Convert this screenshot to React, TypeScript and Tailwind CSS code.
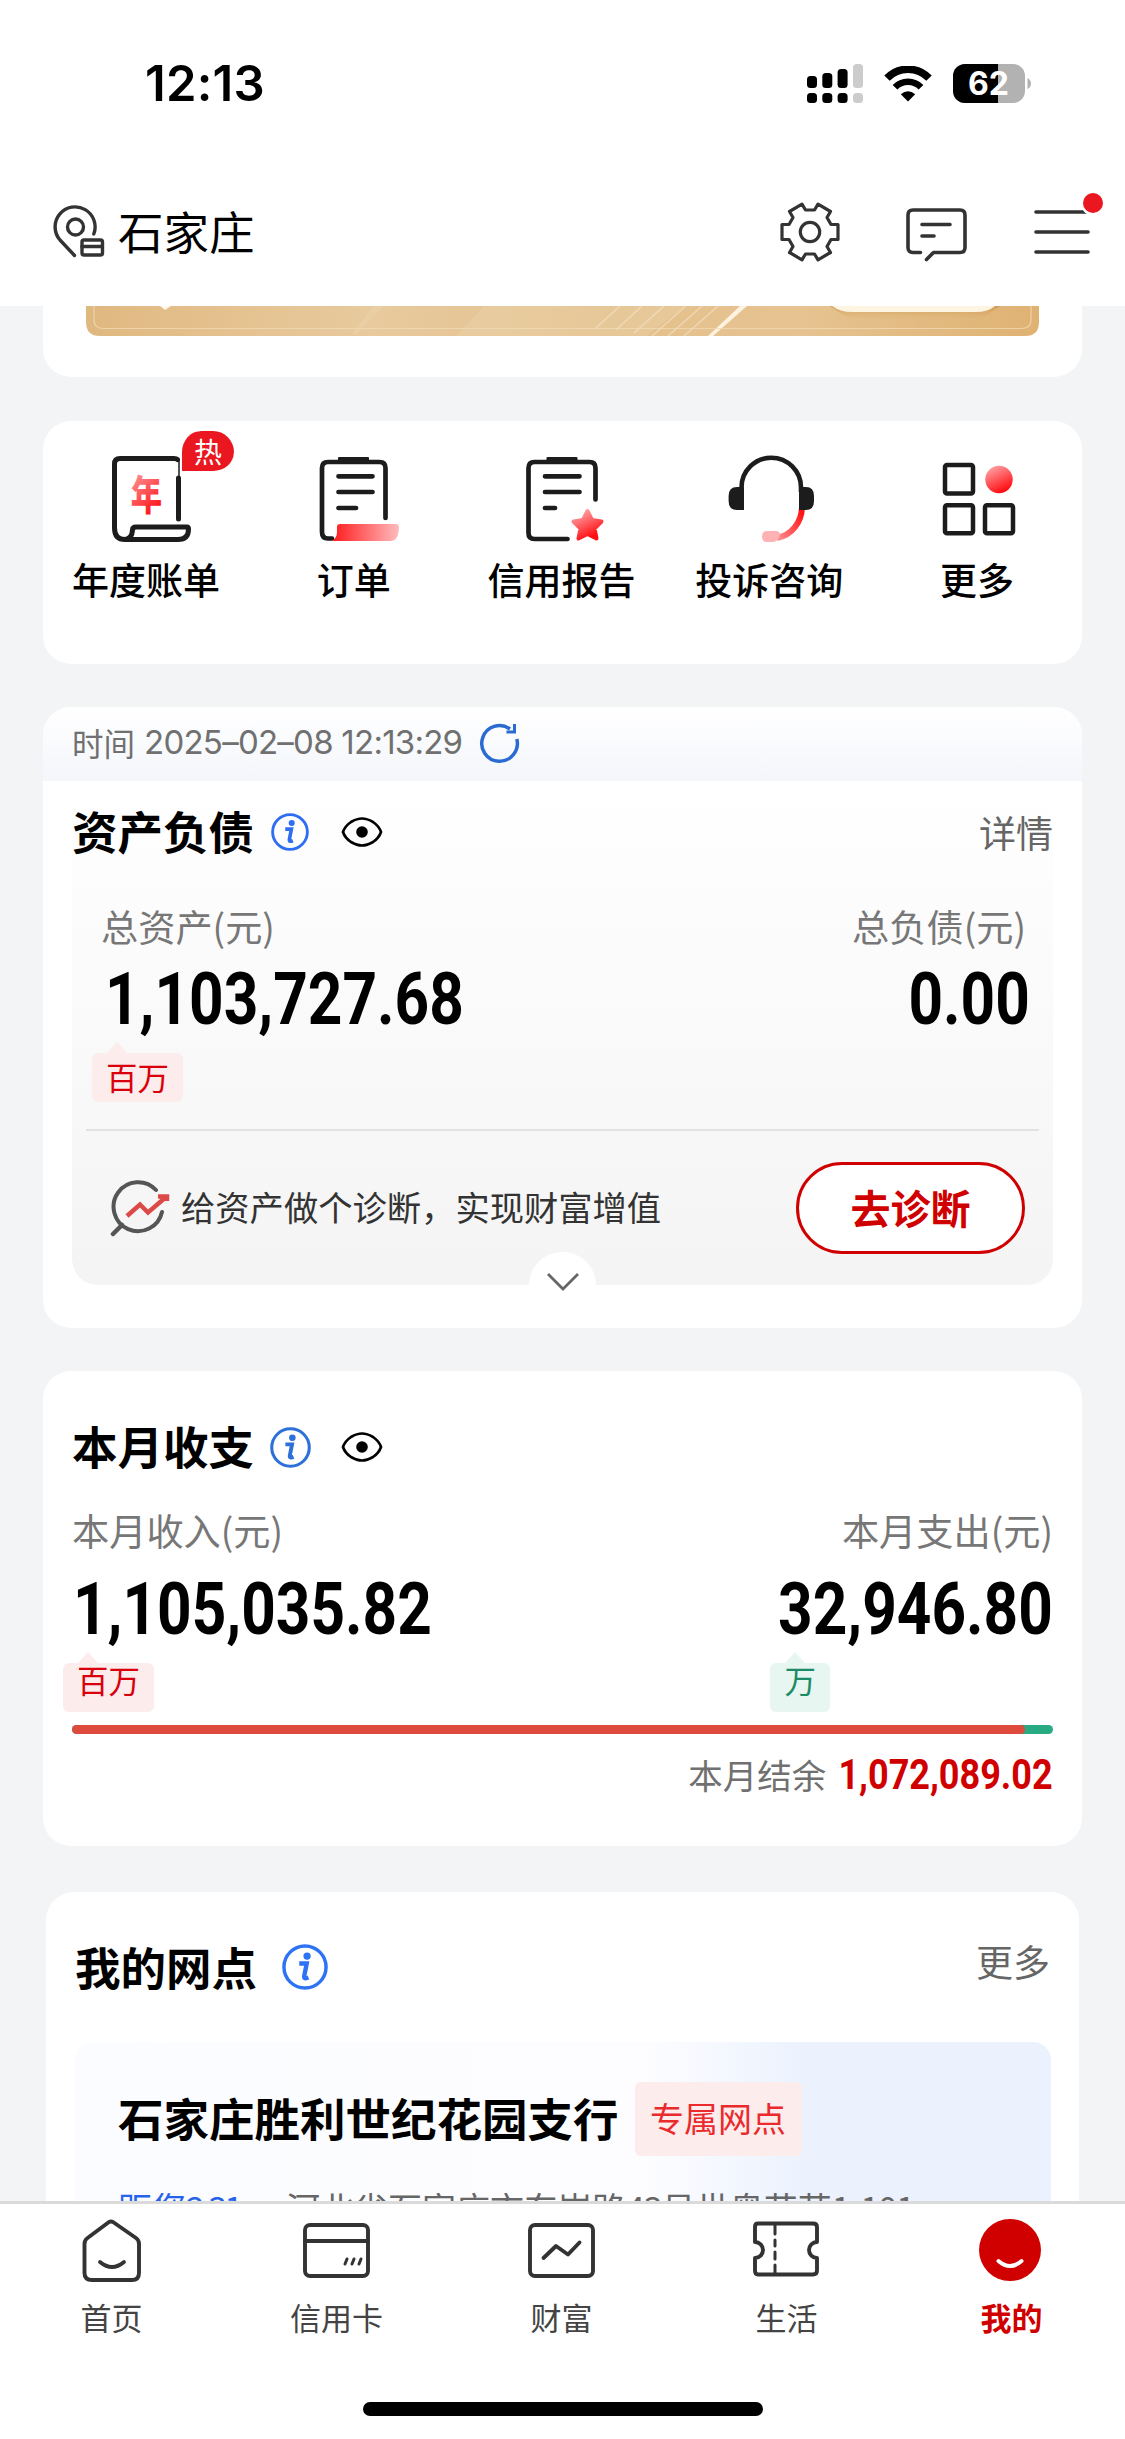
import type { ReactNode } from "react";

const INK = "#1c1c1c";
const LINE = "#333333";

function StatusBar() {
  return (
    <div className="flex h-[167px] items-center justify-between pl-[145px] pr-[94px]">
      <span className="font-[Inter] text-[49px] font-semibold leading-none tracking-[0.2px] text-black">12:13</span>
      <div className="flex h-[39px] items-center">
        <svg width="56" height="39" viewBox="0 0 56 39" className="mr-[21px]">
          <g fill="#000">
            <rect x="0" y="12" width="10" height="12" rx="3.5" />
            <rect x="15.3" y="9" width="10" height="15" rx="3.5" />
            <rect x="30.6" y="5" width="10" height="19" rx="3.5" />
            <rect x="0" y="29" width="10" height="10" rx="3.5" />
            <rect x="15.3" y="29" width="10" height="10" rx="3.5" />
            <rect x="30.6" y="29" width="10" height="10" rx="3.5" />
          </g>
          <g fill="#cccccc">
            <rect x="46" y="0" width="10" height="24" rx="3.5" />
            <rect x="46" y="29" width="10" height="10" rx="3.5" />
          </g>
        </svg>
        <svg width="48" height="36" viewBox="0 0 48 36" className="mr-[21px]">
          <path d="M3 12.2A29 29 0 0 1 45 12.2" fill="none" stroke="#000" strokeWidth="7.5" />
          <path d="M11 21.3A18 18 0 0 1 37 21.3" fill="none" stroke="#000" strokeWidth="6.5" />
          <path d="M24 35.500L16.800 28.300Q24 22.200 31.200 28.300Z" />
        </svg>
        <svg width="78" height="39" viewBox="0 0 78 39">
          <defs>
            <clipPath id="battery"><rect width="72" height="39" rx="12" /></clipPath>
          </defs>
          <g clipPath="url(#battery)">
            <rect width="72" height="39" fill="#b2b2b2" />
            <rect width="45" height="39" fill="#000" />
          </g>
          <path d="M74.500 14Q78 16 78 19.500Q78 23 74.500 25Z" fill="#b2b2b2" />
          <text x="35.500" y="31" textAnchor="middle" fontFamily="Inter" fontWeight="700" fontSize="32" fill="#fff">62</text>
        </svg>
      </div>
    </div>
  );
}

function Header() {
  return (
    <div className="flex h-[139px] items-start justify-between pl-[52px] pr-[18px]">
      <div className="flex h-[130px] items-center">
        <svg width="54" height="54" viewBox="0 0 54 54" fill="none" stroke={LINE} strokeWidth="3.400" strokeLinecap="round" strokeLinejoin="round">
          <path d="M41.800 29A20 20 0 1 0 8 35L22.500 50.500" />
          <circle cx="23.500" cy="22" r="8" />
          <rect x="30" y="35" width="20.500" height="15" rx="2" />
          <path d="M30 41.500H50" />
        </svg>
        <span className="ml-[12px] pb-[3px] text-[45.500px] leading-none text-black">石家庄</span>
      </div>
      <div className="flex h-[130px] items-center">
        <svg width="62" height="62" viewBox="-31 -31 62 62" fill="none" stroke={LINE} strokeWidth="3.200" strokeLinejoin="round">
          <circle r="9.700" />
          <path d="M-4.500 -22H4.500L8 -27.800L20.500 -20.500L17 -14.500L21 -7.500H28V7.500H21L17 14.500L20.500 20.500L8 27.800L4.500 22H-4.500L-8 27.800L-20.500 20.500L-17 14.500L-21 7.500H-28V-7.500H-21L-17 -14.500L-20.500 -20.500L-8 -27.800Z" />
        </svg>
        <svg width="62" height="62" viewBox="0 0 62 62" fill="none" stroke={LINE} strokeWidth="3.600" strokeLinecap="round" strokeLinejoin="round" className="ml-[64px]">
          <path d="M15.500 51.500H8Q3 51.500 3 46.500V14Q3 9 8 9H55Q60 9 60 14V46.500Q60 51.500 55 51.500H28.500L21.500 58.500" />
          <path d="M17 23.500H45M17 35H29" />
        </svg>
        <svg width="74" height="62" viewBox="0 0 74 62" className="ml-[66px]">
          <path d="M3 11H55M3 31H55M3 51H55" stroke={LINE} strokeWidth="3.600" strokeLinecap="round" />
          <circle cx="60.500" cy="2.500" r="12.500" fill="#fff" />
        </svg>
      </div>
    </div>
  );
}

function Banner() {
  return (
    <div className="h-[71px] rounded-b-[28px] bg-white px-[43px]">
      <svg width="953" height="30" viewBox="0 0 953 30">
        <defs>
          <linearGradient id="gold" x1="0" x2="1">
            <stop offset="0" stopColor="#dfb880" />
            <stop offset="0.080" stopColor="#e3bd88" />
            <stop offset="0.300" stopColor="#e8ca9e" />
            <stop offset="0.550" stopColor="#e4c08c" />
            <stop offset="0.750" stopColor="#e6c391" />
            <stop offset="1" stopColor="#dfb272" />
          </linearGradient>
          <linearGradient id="pillShade" x1="0" x2="0" y1="0" y2="1">
            <stop offset="0" stopColor="#c4924b" stopOpacity="0.700" />
            <stop offset="1" stopColor="#dcae6c" stopOpacity="0" />
          </linearGradient>
          <clipPath id="bannerClip"><path d="M0 0H953V16Q953 30 939 30H14Q0 30 0 16Z" /></clipPath>
        </defs>
        <g clipPath="url(#bannerClip)">
          <rect width="953" height="30" fill="url(#gold)" />
          <path d="M266 28L288 0H298L270 28ZM370 30L398 0H600L560 30Z" fill="#efd9b5" opacity="0.300" />
          <path d="M510 22L534 0M530 24L556 0M548 27L578 0M566 30L600 0M582 30L616 0M598 30L632 0" stroke="#f6e6ca" strokeWidth="1.500" opacity="0.600" />
          <path d="M622 30L654 0H661L627 30Z" fill="#fdf3e0" />
          <path d="M74 0H85L79 4Z" fill="#fff7e8" />
          <path d="M744 0H914L894 14H764Z" fill="url(#pillShade)" />
          <path d="M746 0H909Q902 6 890 6H766Q754 6 746 0Z" fill="#fdf4e2" />
          <path d="M8 0V14Q8 22.500 18 22.500H935Q945 22.500 945 14V0" fill="none" stroke="#f0d9b4" strokeWidth="1.200" opacity="0.800" />
        </g>
      </svg>
    </div>
  );
}

function Defs() {
  return (
    <svg width="0" height="0" className="absolute">
      <defs>
        <linearGradient id="redDown" x1="0" y1="0" x2="0.500" y2="1">
          <stop offset="0" stopColor="#ffb3b5" />
          <stop offset="1" stopColor="#ff0f14" />
        </linearGradient>
        <linearGradient id="redSide" x1="0" y1="0" x2="1" y2="0">
          <stop offset="0" stopColor="#ff1a1d" />
          <stop offset="1" stopColor="#ffbcbd" />
        </linearGradient>
        <linearGradient id="redMic" gradientUnits="userSpaceOnUse" x1="46" y1="90" x2="84" y2="64">
          <stop offset="0" stopColor="#ffb8b8" />
          <stop offset="1" stopColor="#ff1216" />
        </linearGradient>
      </defs>
    </svg>
  );
}

const stroke = { fill: "none", stroke: INK, strokeWidth: 5, strokeLinecap: "round", strokeLinejoin: "round" } as const;

const shortcuts: { label: string; icon: ReactNode; hot?: boolean }[] = [
  {
    label: "年度账单",
    hot: true,
    icon: (
      <>
        <g {...stroke}>
          <path d="M82.500 28V69" />
          <path d="M81.500 9.500Q80.500 8.500 78 8.500H24Q18.500 8.500 18.500 14V78Q18.500 89.500 29 89.500H82Q92.500 89.500 92.500 79Q92.500 77 91 77H40Q36.500 77 36.500 80Q36 89 29 89.500" />
        </g>
        <path d="M83 10V28" stroke={INK} strokeWidth="1.500" />
        <text x="0" y="0" transform="translate(50.500 60) scale(0.920 1.200)" textAnchor="middle" fontFamily="Noto Sans CJK SC" fontWeight="900" fontSize="34" fill="url(#redDown)">年</text>
      </>
    ),
  },
  {
    label: "订单",
    icon: (
      <>
        <path {...stroke} strokeWidth={4.700} d="M81.500 68V18Q81.500 12 75.500 12H24Q18 12 18 18V82Q18 88.500 24 88.500H28" />
        <rect x="34" y="7" width="31" height="7" rx="1" fill={INK} />
        <path {...stroke} strokeWidth={4.700} d="M34.500 26.300H68.500M34.500 42H68.500M34.500 58H52" />
        <path d="M33 77Q33 74 36 74H92Q95 74 95 77Q95 91 86 91H28Q33 88 33 82Z" fill="url(#redSide)" />
      </>
    ),
  },
  {
    label: "信用报告",
    icon: (
      <>
        <path {...stroke} strokeWidth={4.700} d="M84.500 49.500V18Q84.500 12 78.500 12H23.500Q17.500 12 17.500 18V83Q17.500 89 23.500 89H56.500" />
        <rect x="35.500" y="7" width="31" height="7" rx="1" fill={INK} />
        <path {...stroke} strokeWidth={4.700} d="M34 26.300H68.500M34 42H68.500M34 58H44" />
        <path d="M76.500 61L81 70L90.500 71.500L83.500 78.500L85.500 88.500L76.500 84L67.500 88.500L69.500 78.500L62.500 71.500L72 70Z" fill="url(#redDown)" stroke="url(#redDown)" strokeWidth="4" strokeLinejoin="round" />
      </>
    ),
  },
  {
    label: "投诉咨询",
    icon: (
      <>
        <path d="M83 56C83 72 73 85 58 88" fill="none" stroke="url(#redMic)" strokeWidth="6" />
        <path d="M48 81H57Q61 81 61 85Q59 92 54 92H48Q43 92 43 86.500Q43 81 48 81Z" fill="#ffb2b3" />
        <path d="M22.500 42V37.500A29.700 29.700 0 0 1 82 37.500V42" fill="none" stroke={INK} strokeWidth="4.600" />
        <path d="M25 37V60H18Q9.600 60 9.600 51V46Q9.600 37 18 37ZM80 37V60H87Q95 60 95 51V46Q95 37 87 37Z" fill={INK} />
      </>
    ),
  },
  {
    label: "更多",
    icon: (
      <>
        <g fill="none" stroke={INK} strokeWidth="4.500">
          <rect x="18" y="15" width="28" height="28.500" rx="2" />
          <rect x="18" y="55.200" width="28" height="28" rx="2" />
          <rect x="58" y="55.200" width="28" height="28" rx="2" />
        </g>
        <circle cx="72" cy="29.500" r="13.700" fill="url(#redDown)" />
      </>
    ),
  },
];

function Shortcuts() {
  return (
    <div className="mt-[44px] h-[243px] rounded-[28px] bg-white pr-px pt-[29px]">
      <div className="-ml-px grid grid-cols-5">
        {shortcuts.map((s) => (
          <div key={s.label} className="relative flex flex-col items-center">
            <svg width="100" height="100" viewBox="0 0 100 100">{s.icon}</svg>
            <span className="mt-[7px] text-[37px] font-medium leading-[44px] text-black">{s.label}</span>
            {s.hot && (
              <span className="absolute left-[138px] top-[-19px] flex h-[42px] w-[54px] items-center justify-center rounded-[21px] rounded-bl-none border-b-2 border-l-2 border-white bg-[#ea1620] pb-px text-[28px] leading-none text-white">
                热
              </span>
            )}
          </div>
        ))}
      </div>
    </div>
  );
}

function Info({ size, color }: { size: number; color: string }) {
  return (
    <svg width={size} height={size} viewBox="0 0 40 40">
      <circle cx="20" cy="20" r="18.300" fill="none" stroke={color} strokeWidth="3" />
      <circle cx="21.800" cy="10.500" r="3.200" fill={color} />
      <path d="M15 17H21.500L19.300 28Q19 30.800 23 29.200" fill="none" stroke={color} strokeWidth="3.800" />
    </svg>
  );
}

function Eye() {
  return (
    <svg width="42" height="32" viewBox="0 0 42 32">
      <path d="M2 16Q4 10 10 6Q16 2.500 21 2.500T32 6Q38 10 40 16Q38 22 32 26Q26 29.500 21 29.500T10 26Q4 22 2 16Z" fill="none" stroke="#000" strokeWidth="2.700" />
      <circle cx="21" cy="16" r="5.800" />
    </svg>
  );
}

function Money({ children, right, small }: { children: string; right?: boolean; small?: boolean }) {
  const size = small ? "text-[43px] text-[#d00000]" : "text-[72px] text-black";
  const origin = right ? "origin-right" : "origin-left";
  return <span className={`inline-block scale-x-[0.838] font-[Roboto] font-bold leading-none ${size} ${origin}`}>{children}</span>;
}

function Tag({ children, green, up }: { children: string; green?: boolean; up?: boolean }) {
  const tone = green ? "bg-[#e8f6f1] text-[#1c8c68]" : "bg-[#fcecec] text-[#d9000c]";
  const tip = green ? "border-b-[#e8f6f1]" : "border-b-[#fcecec]";
  return (
    <span className={`relative inline-flex h-[49px] justify-center rounded-[6px] px-[14px] text-[31.500px] ${up ? "leading-[33px]" : "leading-[47px]"} ${tone}`}>
      <span className={`absolute left-[15px] top-[-11px] border-x-[10px] border-b-[11px] border-x-transparent ${tip}`} />
      {children}
    </span>
  );
}

function Assets() {
  return (
    <div className="mt-[43px] h-[621px] rounded-[28px] bg-white">
      <div className="flex h-[74px] items-center rounded-t-[28px] bg-linear-to-b from-white to-[#f4f6fb] pb-[3px] pl-[29px] text-[31.500px] text-[#707070]">
        <span>时间</span>
        <span className="ml-[9px] font-[Inter] text-[33px] tracking-[-0.750px]">2025–02–08 12:13:29</span>
        <svg width="42" height="42" viewBox="0 0 42 42" fill="none" stroke="#2a6bd2" strokeWidth="3.500" className="ml-[17px]">
          <path d="M37.800 17A17.800 17.800 0 1 1 31 7" />
          <path d="M35.500 2V10H27.500" strokeWidth="3" />
        </svg>
      </div>
      <div className="relative mx-[29px] h-[504px] rounded-b-[26px] bg-linear-to-b from-white to-[#f4f4f4]">
        <div className="flex h-[102px] items-center">
          <span className="pb-[3px] text-[45.500px] font-bold leading-none text-black">资产负债</span>
          <div className="ml-[17px] flex items-center gap-[32px]">
            <Info size={38} color="#2f6df2" />
            <Eye />
          </div>
          <span className="ml-auto text-[37px] leading-none text-[#666]">详情</span>
        </div>
        <div className="flex h-[90px] items-center justify-between pb-[3px] pl-[29px] pr-[27px] text-[37.200px] text-[#777]">
          <span>总资产(元)</span>
          <span>总负债(元)</span>
        </div>
        <div className="flex h-[50px] items-center justify-between pl-[33px] pr-[23px] pt-[4px]">
          <Money>1,103,727.68</Money>
          <Money right>0.00</Money>
        </div>
        <div className="mt-[30px] flex h-[49px] pl-[20px]"><Tag>百万</Tag></div>
        <div className="mx-[14px] mt-[27px] h-[2px] bg-[#e2e2e2]" />
        <div className="flex h-[154px] items-center pl-[38px] pr-[28px]">
          <svg width="62" height="58" viewBox="0 0 62 58" fill="none" strokeLinecap="round">
            <path d="M46 11A24.500 24.500 0 1 0 52 33" stroke="#555" strokeWidth="4" />
            <path d="M12 46L3 55" stroke="#555" strokeWidth="4.500" />
            <path d="M17 37L30 25.500L38 33.500L56 18M48 17.500H57V22" stroke="#dc4a48" strokeWidth="4.500" strokeLinecap="butt" />
          </svg>
          <span className="ml-[9px] pb-[3px] text-[34.300px] leading-none text-[#333]">给资产做个诊断，实现财富增值</span>
          <button className="ml-auto flex h-[92px] w-[229px] items-center justify-center rounded-full border-3 border-[#d00000] bg-white pb-[3px] text-[40px] font-bold leading-none text-[#d00000]">
            去诊断
          </button>
        </div>
        <div className="absolute bottom-[-33px] left-[457px] flex h-[66px] w-[67px] items-center justify-center rounded-full bg-white">
          <svg width="34" height="20" viewBox="0 0 34 20" className="mt-[-7px]">
            <path d="M2 2L17 17L32 2" fill="none" stroke="#666" strokeWidth="2.800" />
          </svg>
        </div>
      </div>
    </div>
  );
}

function Monthly() {
  return (
    <div className="mt-[43px] h-[475px] rounded-[28px] bg-white px-[29px] pt-[24px]">
      <div className="flex h-[104px] items-center">
        <span className="pb-[3px] text-[45.500px] font-bold leading-none text-black">本月收支</span>
        <div className="ml-[16px] flex items-center gap-[30px]">
          <Info size={41} color="#2d70d8" />
          <Eye />
        </div>
      </div>
      <div className="flex h-[66px] items-center justify-between pb-[3px] text-[37.200px] text-[#777]">
        <span>本月收入(元)</span>
        <span>本月支出(元)</span>
      </div>
      <div className="flex h-[86px] items-center justify-between pl-px pt-[4px]">
        <Money>1,105,035.82</Money>
        <Money right>32,946.80</Money>
      </div>
      <div className="mt-[12px] flex h-[48px] justify-between pr-[223px]">
        <div className="ml-[-9px]"><Tag up>百万</Tag></div>
        <Tag up green>万</Tag>
      </div>
      <div className="mt-[14px] h-[9px] overflow-hidden rounded-full bg-[#28ab83]">
        <div className="h-full w-[953px] rounded-r-full bg-[#de4b3d]" />
      </div>
      <div className="flex h-[82px] items-center justify-end pb-[2px]">
        <span className="mr-[-29px] text-[34.500px] leading-none text-[#707070]">本月结余</span>
        <Money right small>1,072,089.02</Money>
      </div>
    </div>
  );
}

function Branch() {
  return (
    <div className="mx-[3px] mt-[46px] h-[309px] overflow-hidden rounded-t-[28px] bg-white pl-[29px] pr-[28px]">
      <div className="flex h-[150px] items-center">
        <span className="text-[45.500px] font-bold leading-none text-black">我的网点</span>
        <div className="ml-[25px]"><Info size={46} color="#2f73f5" /></div>
        <span className="mb-[12px] ml-auto mr-px text-[37px] leading-none text-[#666]">更多</span>
      </div>
      <div className="h-[240px] rounded-[18px] bg-linear-to-r from-[#fbfcff] from-0% via-[#fdfdff] via-58% to-[#ebf2fe] to-75% px-[43px] pt-[40px]">
        <div className="flex h-[74px] items-center">
          <span className="pb-[3px] text-[45.500px] font-bold leading-none text-black">石家庄胜利世纪花园支行</span>
          <span className="ml-[16px] flex h-[74px] w-[167px] items-center justify-center rounded-[6px] bg-[#fcecec] pb-[3px] text-[34px] leading-none text-[#ea2a2c]">
            专属网点
          </span>
        </div>
        <div className="mt-[32px] flex text-[34px] leading-[40px]">
          <span className="w-[168px] text-[#2563eb]">距您<span className="tracking-[-3px]">2.31</span></span>
          <span className="whitespace-nowrap text-[#666]">河北省石家庄市东岗路<span className="tracking-[-1px]">43</span>号世奥花苑<span className="tracking-[-1px]">1-101</span></span>
        </div>
      </div>
    </div>
  );
}

const tabs: { label: string; icon: ReactNode; active?: boolean }[] = [
  {
    label: "首页",
    icon: (
      <>
        <path d="M31 3Q33 2 35 3L58 19Q61 21 61 25V54Q61 61 54 61H14Q6.500 61 6.500 54V25Q6.500 21 9.500 19Z" />
        <path d="M22 43Q34 53 46 43" strokeWidth="3.800" />
      </>
    ),
  },
  {
    label: "信用卡",
    icon: (
      <>
        <rect x="2" y="6" width="63" height="51" rx="5" />
        <path d="M2 22H65" />
        <path d="M42 45L44 40M49 45L51 40M56 45L58 40" strokeWidth="3" />
      </>
    ),
  },
  {
    label: "财富",
    icon: (
      <>
        <rect x="2" y="6" width="63" height="51" rx="5" />
        <path d="M15.500 39L28 27L40 35.500L51.500 23.500" />
      </>
    ),
  },
  {
    label: "生活",
    icon: (
      <>
        <path d="M5 4.500H60Q64 4.500 64 8V23A8 8 0 0 0 64 39V51.500Q64 55.500 60 55.500H5Q2 55.500 2 51.500V39A8 8 0 0 0 2 23V8Q2 4.500 5 4.500Z" />
        <path d="M22 5V15M22 21V27M22 33V40M22 46V54" strokeWidth="3" />
      </>
    ),
  },
  {
    label: "我的",
    active: true,
    icon: (
      <>
        <circle cx="32" cy="31" r="31" fill="#d00000" stroke="none" />
        <path d="M20.500 42Q32 52 43.500 42" stroke="#fff" strokeWidth="4" />
      </>
    ),
  },
];

function TabBar() {
  return (
    <div className="flex h-[238px] flex-col border-t-3 border-[#dadada] bg-white">
      <div className="-ml-px mr-px grid grid-cols-5 pt-[15px]">
        {tabs.map((t) => (
          <div key={t.label} className="flex flex-col items-center">
            <svg width="68" height="64" viewBox="0 0 68 64" fill="none" stroke={LINE} strokeWidth="3.900" strokeLinecap="round" strokeLinejoin="round">
              {t.icon}
            </svg>
            <span className={`mt-[14px] text-[31px] leading-[40px] ${t.active ? "font-bold text-[#d00000]" : "text-[#444]"}`}>{t.label}</span>
          </div>
        ))}
      </div>
      <div className="mx-auto mb-[23px] mt-auto h-[14px] w-[400px] rounded-full bg-black" />
    </div>
  );
}

export default function App() {
  return (
    <div className="relative flex h-[2439px] w-[1125px] flex-col overflow-hidden bg-[#f3f4f6] font-['Noto_Sans_CJK_SC',sans-serif]">
      <Defs />
      <div className="relative bg-white">
        <StatusBar />
        <Header />
        <span className="absolute left-[1083px] top-[193px] size-[20px] rounded-full bg-[#ea1620]" />
      </div>
      <div className="h-[1895px] overflow-hidden px-[43px]">
        <Banner />
        <Shortcuts />
        <Assets />
        <Monthly />
        <Branch />
      </div>
      <TabBar />
    </div>
  );
}
